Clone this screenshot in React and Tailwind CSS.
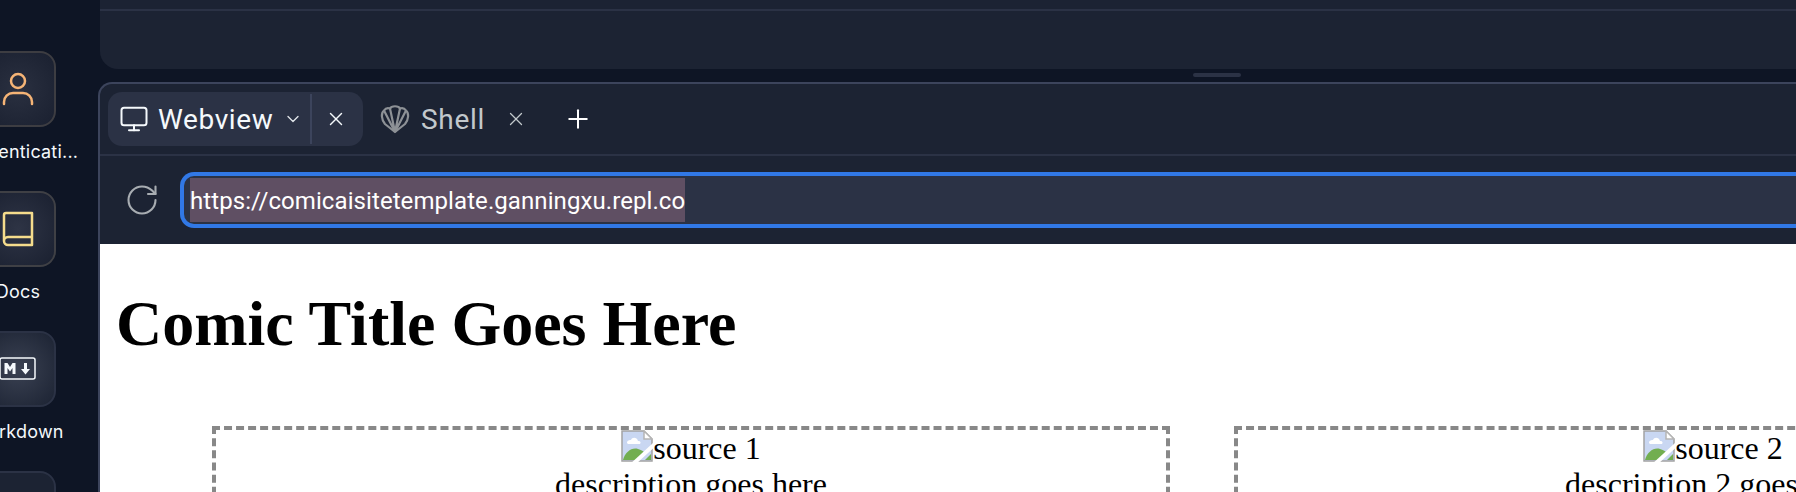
import React from "react";
import { Monitor, ChevronDown, X, RotateCw, Plus } from "lucide-react";

const ui = "font-['Roboto','Inter',sans-serif]";

function PersonIcon() {
  return (
    <svg width="34" height="36" viewBox="0 0 34 36" fill="none" stroke="#f5b476" strokeWidth="2.5" strokeLinecap="round">
      <circle cx="17" cy="10" r="7" />
      <path d="M3 33v-2a9 9 0 0 1 9-9h10a9 9 0 0 1 9 9v2" />
    </svg>
  );
}

function BookIcon() {
  return (
    <svg width="34" height="36" viewBox="0 0 34 36" fill="none" stroke="#f5dc8c" strokeWidth="2.5" strokeLinejoin="round" strokeLinecap="round">
      <path d="M3 30V4a2 2 0 0 1 2-2h26v32H7a4 4 0 0 1-4-4 4 4 0 0 1 4-4h24" />
    </svg>
  );
}

function MarkdownIcon() {
  return (
    <svg width="38" height="24" viewBox="0 0 38 24" fill="none">
      <rect x="1" y="1" width="35" height="21" rx="2" stroke="#f5f9fc" strokeWidth="1.5" />
      <path d="M5.5 17V6h3l2.500 4 2.500-4h3v11h-3v-6l-2.500 3.500L8.500 11v6z" fill="#f5f9fc" />
      <path d="M25 6h3v6h3l-4.500 5.500L22 12h3z" fill="#f5f9fc" />
    </svg>
  );
}

function ShellIcon() {
  return (
    <svg width="30" height="30" viewBox="0 0 30 30" fill="none" stroke="#8d9196" strokeWidth="2.2" strokeLinejoin="round">
      <path d="M15 28 5 20C1 15 1 9 4 6.500c2-3 4.500-2.500 6-2 1.500-3 8.500-3 10 0 1.500-.5 4-1 6 2 3 2.500 3 8.500-1 13.500z" />
      <path d="M15 28 10 4.500M15 28l5-23.500M15 28 4 6.500M15 28 26 6.500" />
    </svg>
  );
}

function BrokenImage() {
  return (
    <svg className="inline-block align-[-3px]" width="32" height="32" viewBox="0 0 32 32">
      <path d="M1 1h22l8 8v22H1z" fill="#c9d7f2" stroke="#a3a3a3" strokeWidth="1.500" />
      <path d="M23 1v8h8z" fill="#fff" stroke="#b5b5b5" strokeWidth="1.500" />
      <path d="M6 13c0-3 3-3 4-3 1-3 6-3 7 1 3 0 3 2 2 3H7z" fill="#fff" />
      <path d="M2 30c2-8 9-13 15-11 3 1 5 2 6 3l-8 8z" fill="#72ae50" />
      <path d="M24 30l6-6v6z" fill="#72ae50" />
      <path d="M12 34 34 14" stroke="#fff" strokeWidth="4" />
    </svg>
  );
}

function Tile({ icon, label, border, glow }) {
  return (
    <div className="flex flex-col items-center w-[76px] ml-[-20px] shrink-0">
      <div className={`w-[76px] h-[76px] rounded-[16px] border-2 flex items-center justify-center ${border} ${glow}`}>
        {icon}
      </div>
      <div className="mt-[14px] h-[50px] leading-[22px] text-[18px] tracking-[0.2px] text-[#f5f9fc] whitespace-nowrap font-['Inter',sans-serif]">{label}</div>
    </div>
  );
}

function Source({ n, desc }) {
  return (
    <div className="w-[958px] shrink-0 border-4 border-dashed border-[#888888] text-center text-[32px] leading-[37px] text-black">
      <div className="h-[36px]"><BrokenImage />source {n}</div>
      <div>{desc}</div>
    </div>
  );
}

export default function App() {
  return (
    <div className={`flex h-[492px] w-[1796px] overflow-hidden bg-[#0e1525] ${ui}`}>
      <aside className="w-[99px] shrink-0 pt-[51px] overflow-hidden flex flex-col">
        <Tile icon={<PersonIcon />} label="Authenticati..." border="border-[#3d3d42]" glow="bg-[radial-gradient(circle,#2a3040_0%,#1a2030_100%)]" />
        <Tile icon={<BookIcon />} label="Docs" border="border-[#3f4045]" glow="bg-[radial-gradient(circle,#2e3445_0%,#1a2030_100%)]" />
        <Tile icon={<MarkdownIcon />} label="Markdown" border="border-[#2b3245]" glow="bg-[radial-gradient(circle,#3a4152_0%,#1c2333_100%)]" />
        <Tile icon={null} label="" border="border-[#2b3245]" glow="bg-[#1c2333]" />
      </aside>

      <main className="flex-1 min-w-0 flex flex-col">
        <section className="h-[69px] shrink-0 bg-[#1c2333] rounded-bl-[18px] ml-px">
          <div className="h-[9px]" />
          <div className="h-[2px] bg-[#2b3245]" />
        </section>

        <div className="h-[13px] shrink-0 flex justify-end items-center pr-[555px]">
          <div className="w-[48px] h-[4px] mt-[-1px] rounded-sm bg-[#2b3245]" />
        </div>

        <section className="flex-1 min-h-0 flex flex-col border-t-2 border-l-2 border-[#3c445c] rounded-tl-[14px] overflow-hidden bg-[#1c2333] ml-[-1px]">
          <div className="h-[70px] shrink-0 flex items-center pl-[8px] border-b-2 border-[#2b3245] box-content">
            <div className="h-[54px] w-[255px] rounded-[14px] bg-[#2b3245] flex items-center text-[#f5f9fc] shrink-0">
              <Monitor className="ml-[11px] w-[30px] h-[30px]" strokeWidth={1.6} />
              <span className="ml-[9px] pt-[2px] text-[28px] leading-none tracking-[0.6px]">Webview</span>
              <ChevronDown className="ml-[10px] w-[20px] h-[20px] opacity-90" strokeWidth={1.6} />
              <div className="ml-[7px] h-[50px] w-[2px] bg-[#3c445c]" />
              <X className="ml-[13px] w-[22px] h-[22px]" strokeWidth={1.6} />
            </div>
            <div className="flex items-center text-[#c2c8cc] shrink-0">
              <span className="ml-[17px]"><ShellIcon /></span>
              <span className="ml-[11px] pt-[2px] text-[28px] leading-none tracking-[0.7px]">Shell</span>
              <X className="ml-[20px] w-[22px] h-[22px]" strokeWidth={1.4} />
              <Plus className="ml-[36px] w-[30px] h-[30px] text-white" strokeWidth={1.6} />
            </div>
          </div>

          <div className="h-[88px] shrink-0 flex items-center pl-[24px]">
            <RotateCw className="w-[36px] h-[36px] text-[#a8adb2] shrink-0" strokeWidth={1.4} />
            <div className="ml-[20px] flex-1 h-[56px] border-4 border-r-0 border-[#3178e6] rounded-l-[14px] bg-[#2b3245] flex items-center pl-[6px]">
              <span className="h-[44px] bg-[#5f4f63] text-white text-[24px] leading-[46px] tracking-[0.08px] whitespace-nowrap">https://comicaisitetemplate.ganningxu.repl.co</span>
            </div>
          </div>

          <div className="flex-1 min-h-0 bg-white overflow-hidden font-['Liberation_Serif',serif] px-[16px] text-black">
            <h1 className="text-[64px] leading-[74px] font-bold mt-[43px] whitespace-nowrap">Comic Title Goes Here</h1>
            <div className="flex gap-[64px] mt-[65px] ml-[96px]">
              <Source n="1" desc="description goes here" />
              <Source n="2" desc="description 2 goes here" />
            </div>
          </div>
        </section>
      </main>
    </div>
  );
}
